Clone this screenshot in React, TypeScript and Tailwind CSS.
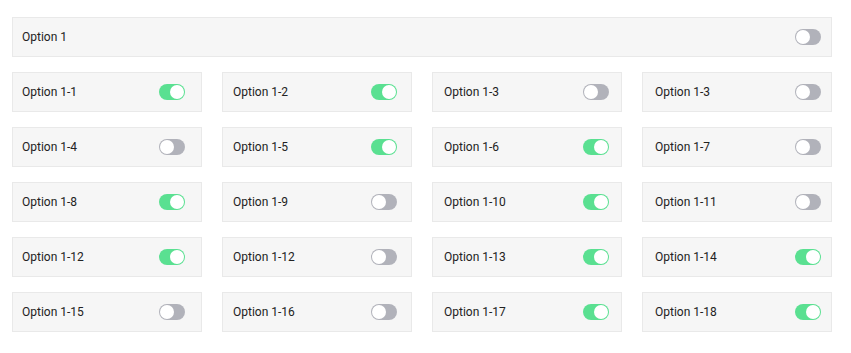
import React from "react";

function Toggle({ on }: { on: boolean }) {
  return (
    <div
      className={
        "relative h-[16px] w-[26px] shrink-0 rounded-full " +
        (on ? "bg-[#5ae091]" : "bg-[#b1b2ba]")
      }
    >
      <div
        className={
          "absolute top-[1px] h-[14px] w-[14px] rounded-full bg-white " +
          (on ? "right-[1px]" : "left-[1px]")
        }
      />
    </div>
  );
}

const pads = [
  "pl-[9px] pr-[16px]",
  "pl-[10px] pr-[14px]",
  "pl-[11px] pr-[12px]",
  "pl-[12px] pr-[10px]",
];

function Card({ label, on, pad }: { label: string; on: boolean; pad: string }) {
  return (
    <div
      className={
        "flex h-[40px] items-center justify-between border border-[#e9e9e9] bg-[#f6f6f6] " +
        pad
      }
    >
      <span className="text-[12px] text-[#222]">{label}</span>
      <Toggle on={on} />
    </div>
  );
}

const items: [string, boolean][] = [
  ["Option 1-1", true],
  ["Option 1-2", true],
  ["Option 1-3", false],
  ["Option 1-3", false],
  ["Option 1-4", false],
  ["Option 1-5", true],
  ["Option 1-6", true],
  ["Option 1-7", false],
  ["Option 1-8", true],
  ["Option 1-9", false],
  ["Option 1-10", true],
  ["Option 1-11", false],
  ["Option 1-12", true],
  ["Option 1-12", false],
  ["Option 1-13", true],
  ["Option 1-14", true],
  ["Option 1-15", false],
  ["Option 1-16", false],
  ["Option 1-17", true],
  ["Option 1-18", true],
];

export default function App() {
  return (
    <div
      className="min-h-[353px] w-[851px] bg-white pl-[12px] pr-[19px] pt-[17px]"
      style={{ fontFamily: "Roboto, 'Liberation Sans', sans-serif" }}
    >
      <Card label="Option 1" on={false} pad="pl-[9px] pr-[10px]" />
      <div className="mt-[15px] grid grid-cols-4 gap-x-[20px] gap-y-[15px]">
        {items.map(([l, o], i) => (
          <Card key={i} label={l} on={o} pad={pads[i % 4]} />
        ))}
      </div>
    </div>
  );
}
